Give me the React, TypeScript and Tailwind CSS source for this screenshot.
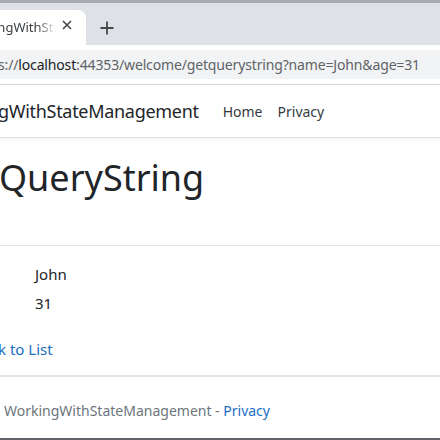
import React from "react";

export default function App() {
  const font = { fontFamily: '"Noto Sans", "Open Sans", sans-serif' };
  return (
    <div className="w-[440px] h-[440px] overflow-hidden bg-white flex flex-col" style={font}>
      {/* top border */}
      <div className="h-[3px] bg-[#a9abae] shrink-0" />
      {/* tab strip */}
      <div className="h-[42px] bg-[#dee1e6] flex items-end shrink-0">
        <div className="w-[86px] h-[35px] bg-white rounded-tr-[8px] flex items-center overflow-hidden relative">
          <span className="text-[13px] text-[#3c4043] whitespace-nowrap ml-[-38px] w-[94px] overflow-hidden"
            style={{ WebkitMaskImage: "linear-gradient(to right, black 80%, transparent 100%)" }}>
            WorkingWithStateManagement
          </span>
          <span className="absolute left-[60px] top-[8px] text-[#3c4043]">
            <svg width="14" height="14" viewBox="0 0 14 14"><path d="M3 3L11 11M11 3L3 11" stroke="#45474a" strokeWidth="1.6" /></svg>
          </span>
        </div>
        <div className="w-[40px] h-[35px] flex items-center justify-center ml-[1px]">
          <svg width="16" height="16" viewBox="0 0 16 16"><path d="M8 1.5V14.5M1.5 8H14.5" stroke="#45474a" strokeWidth="1.8" /></svg>
        </div>
      </div>
      {/* toolbar */}
      <div className="h-[40px] bg-white flex items-center shrink-0 border-b border-[#d5d7da]">
        <div className="w-full h-[29px] bg-[#f1f3f4] flex items-center overflow-hidden">
          <span className="text-[14px] tracking-[-0.15px] whitespace-nowrap text-[#5f6368] ml-[-2px]">
            s://<span className="text-[#202124]">localhost</span>:44353/welcome/getquerystring?name=John&amp;age=31
          </span>
        </div>
      </div>
      {/* navbar */}
      <div className="h-[53px] bg-white flex items-center shrink-0 border-b border-[#dee2e6] shadow-[0_2px_4px_rgba(0,0,0,0.05)] overflow-hidden">
        <span className="text-[18px] tracking-[-0.3px] text-[#212529] whitespace-nowrap ml-[-2px]">gWithStateManagement</span>
        <span className="text-[14px] text-[#343a40] ml-[24px]">Home</span>
        <span className="text-[14px] text-[#343a40] ml-[15px]">Privacy</span>
      </div>
      {/* main */}
      <div className="flex-1 flex flex-col overflow-hidden">
        <h1 className="text-[36px] leading-none text-[#212529] mt-[22px] ml-[-1px] whitespace-nowrap">QueryString</h1>
        <div className="mt-[49px] border-t border-[#e5e5e5]" />
        <div className="ml-[35px] mt-[19px] text-[15px] text-[#212529] flex flex-col gap-[10px] leading-[19px]">
          <span>John</span>
          <span>31</span>
        </div>
        <div className="mt-[25px] text-[15px] text-[#1b6ec2] whitespace-nowrap ml-[-2px]">k to List</div>
        <div className="mt-[14px] border-t-2 border-[#e5e5e5]" />
        <div className="mt-[23px] text-[14px] text-[#6c757d] ml-[4px] whitespace-nowrap">
          WorkingWithStateManagement - <span className="text-[#1b6ec2]">Privacy</span>
        </div>
      </div>
      <div className="h-[2px] bg-[#5f6368] shrink-0" />
    </div>
  );
}
